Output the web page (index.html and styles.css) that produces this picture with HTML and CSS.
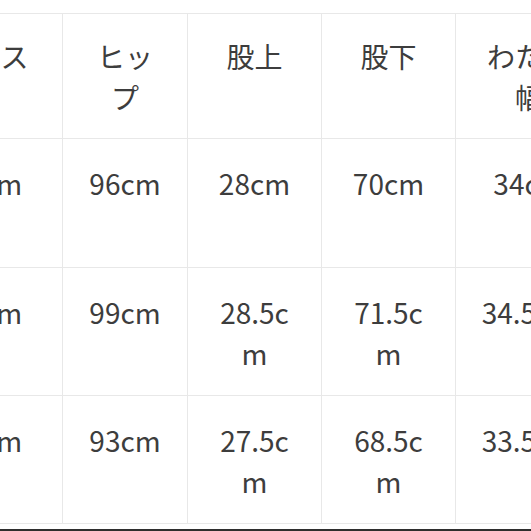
FILE: index.html
```html
<!DOCTYPE html>
<html lang="ja">
<head>
<meta charset="utf-8">
<link rel="stylesheet" href="styles.css">
</head>
<body>
<div class="viewport">
  <table class="size-table">
    <colgroup>
      <col class="c1"><col class="c2"><col class="c3"><col class="c4"><col class="c5">
    </colgroup>
    <thead>
      <tr class="r-head">
        <th>ウエスト</th><th>ヒップ</th><th>股上</th><th>股下</th><th>わたり幅</th>
      </tr>
    </thead>
    <tbody>
      <tr class="r1">
        <td>66cm</td><td>96cm</td><td>28cm</td><td>70cm</td><td>34cm</td>
      </tr>
      <tr class="r2">
        <td>69cm</td><td>99cm</td><td>28.5cm</td><td>71.5cm</td><td>34.5cm</td>
      </tr>
      <tr class="r3">
        <td>63cm</td><td>93cm</td><td>27.5cm</td><td>68.5cm</td><td>33.5cm</td>
      </tr>
    </tbody>
  </table>
  <div class="footer-bar"></div>
</div>
</body>
</html>
```

FILE: styles.css
```css
html, body {
  margin: 0;
  padding: 0;
  background: #ffffff;
}

.viewport {
  width: 531px;
  height: 531px;
  overflow: hidden;
  padding-top: 13px;
  box-sizing: border-box;
}

.size-table {
  margin-left: -90px;
  border-collapse: collapse;
  table-layout: fixed;
  width: 692px;
  font-family: "Noto Sans CJK JP", "Noto Sans", sans-serif;
  font-size: 28px;
  line-height: 41px;
  color: #3d3d3d;
}

.c1 { width: 152px; }
.c2 { width: 125px; }
.c3 { width: 134px; }
.c4 { width: 134px; }
.c5 { width: 147px; }

.size-table th,
.size-table td {
  border: 1px solid #e8e8e8;
  text-align: center;
  vertical-align: top;
  font-weight: normal;
  padding: 22px 24px 0;
  box-sizing: border-box;
  word-break: break-all;
}

.r-head { height: 125px; }
.r1 { height: 129px; }
.r2 { height: 128px; }
.r3 { height: 128px; }

.size-table td {
  padding-top: 24px;
}

.footer-bar {
  margin-top: 5px;
  height: 2px;
  background: #2e2e2e;
}
```
